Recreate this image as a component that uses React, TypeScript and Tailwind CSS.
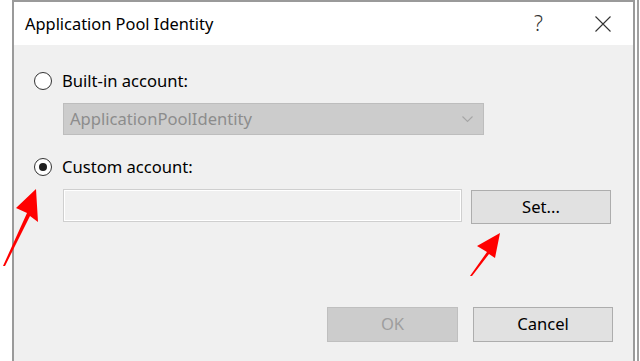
import React from 'react';

const FONT = { fontFamily: '"Noto Sans", "Open Sans", sans-serif' };

function Radio({ checked }: { checked?: boolean }) {
  return (
    <span className="flex h-[18px] w-[18px] items-center justify-center rounded-full border border-[#333333] bg-white">
      {checked && <span className="h-[8px] w-[8px] rounded-full bg-[#1f1f1f]" />}
    </span>
  );
}

function Arrows() {
  return (
    <svg className="pointer-events-none absolute left-0 top-0" width="640" height="361">
      <path d="M3 266 L27 213 L16 208 L36 189 L38 222 L30 216 L5 266 Z" fill="#ff0000" />
      <path d="M470 276 L487 252 L477 246 L500 233 L495 258 L489 254 L472 276 Z" fill="#ff0000" />
    </svg>
  );
}

export default function App() {
  return (
    <div className="relative flex h-[361px] w-[640px] overflow-hidden bg-white" style={FONT}>
      <div className="w-[12px] shrink-0 bg-white" />
      <div className="flex w-[623px] shrink-0 flex-col border-l-2 border-r-2 border-t-2 border-[#9a9a9a]">
        {/* title bar */}
        <div className="flex h-[43px] shrink-0 items-center bg-white pl-[11px] text-[16.4px] text-black">
          <span className="pt-[1px]">Application Pool Identity</span>
          <span className="ml-auto mr-[52px] text-[21px] font-light leading-none text-[#333]">?</span>
          <svg width="16" height="16" viewBox="0 0 16 16" className="mr-[22px]">
            <path d="M0.5 0.5 L15.5 15.5 M15.5 0.5 L0.5 15.5" stroke="#333" strokeWidth="1.1" />
          </svg>
        </div>

        {/* body */}
        <div className="flex flex-1 flex-col bg-[#f0f0f0] pl-[20px] text-[16.6px] text-black">
          <div className="mt-[26px] flex h-[20px] items-center gap-[10px]">
            <Radio />
            <span>Built-in account:</span>
          </div>

          <div className="ml-[29px] mt-[12px] flex h-[32px] w-[421px] items-center border border-[#bdbdbd] bg-[#cccccc] pl-[6px] pr-[10px] text-[#8c8c8c]">
            <span>ApplicationPoolIdentity</span>
            <svg width="11" height="7" viewBox="0 0 11 7" className="ml-auto">
              <path d="M0.5 0.5 L5.5 5.5 L10.5 0.5" stroke="#a6a6a6" strokeWidth="1.1" fill="none" />
            </svg>
          </div>

          <div className="mt-[22px] flex h-[20px] items-center gap-[10px]">
            <Radio checked />
            <span>Custom account:</span>
          </div>

          <div className="ml-[29px] mt-[12px] flex items-start">
            <div className="h-[33px] w-[399px] border border-[#cfcfcf] bg-[#f0f0f0] shadow-[inset_0_0_0_1px_#ffffff]" />
            <button className="ml-[9px] mt-[1px] flex h-[34px] w-[140px] items-center justify-center border border-[#adadad] bg-[#e1e1e1] text-black">
              Set...
            </button>
          </div>

          <div className="mt-[83px] flex items-center">
            <button className="ml-[293px] flex h-[35px] w-[131px] items-center justify-center border border-[#bfbfbf] bg-[#cccccc] text-[#9e9e9e]">
              OK
            </button>
            <button className="ml-[15px] flex h-[35px] w-[140px] items-center justify-center border border-[#adadad] bg-[#e1e1e1] text-black">
              Cancel
            </button>
          </div>
        </div>
      </div>
      <div className="w-[2px] shrink-0 bg-white" />
      <div className="w-[2px] shrink-0 bg-[#a0a0a0]" />
      <Arrows />
    </div>
  );
}
